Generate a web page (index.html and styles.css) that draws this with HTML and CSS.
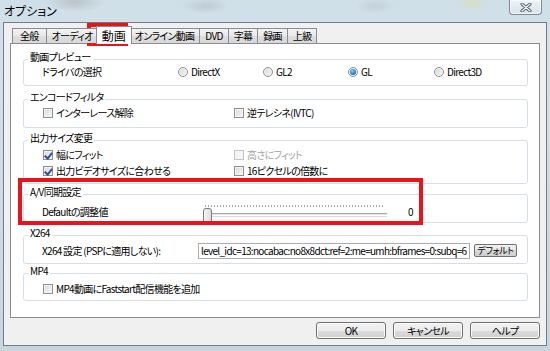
FILE: index.html
```html
<!DOCTYPE html>
<html lang="ja">
  <head>
    <meta charset="UTF-8" />
    <title>オプション</title>
    <link rel="stylesheet" href="styles.css">
  </head>
  <body>
    <div class="window">
      <div class="titlebar">
        <span class="title">オプション</span>
        <button class="close" aria-label="閉じる">
          <svg width="12" height="9" viewBox="0 0 12 9">
            <path d="M2 1 L10 8 M10 1 L2 8" stroke="#44505c" stroke-width="3" stroke-linecap="round" />
            <path d="M2 1 L10 8 M10 1 L2 8" stroke="#ffffff" stroke-width="1.2" stroke-linecap="round" />
          </svg>
        </button>
      </div>

      <div class="client">
        <div class="tabs">
          <span class="tab">全般</span>
          <span class="tab">オーディオ</span>
          <span class="tab active">動画</span>
          <span class="tab">オンライン動画</span>
          <span class="tab">DVD</span>
          <span class="tab">字幕</span>
          <span class="tab">録画</span>
          <span class="tab">上級</span>
        </div>

        <div class="panel">
          <div class="group g-preview">
            <span class="legend">動画プレビュー</span>
            <div class="row drivers">
              <span>ドライバの選択</span>
              <span class="opt"><i class="radio"></i>DirectX</span>
              <span class="opt"><i class="radio"></i>GL2</span>
              <span class="opt"><i class="radio on"></i>GL</span>
              <span class="opt"><i class="radio"></i>Direct3D</span>
            </div>
          </div>

          <div class="group g-filter">
            <span class="legend">エンコードフィルタ</span>
            <div class="row cols">
              <span class="opt"><i class="check"></i>インターレース解除</span>
              <span class="opt"><i class="check"></i>逆テレシネ(IVTC)</span>
            </div>
          </div>

          <div class="group g-size">
            <span class="legend">出力サイズ変更</span>
            <div class="row cols">
              <span class="opt"><i class="check on"></i>幅にフィット</span>
              <span class="opt off"><i class="check"></i>高さにフィット</span>
            </div>
            <div class="row cols">
              <span class="opt"><i class="check on"></i>出力ビデオサイズに合わせる</span>
              <span class="opt"><i class="check"></i>16ピクセルの倍数に</span>
            </div>
          </div>

          <div class="group g-sync">
            <span class="legend">A/V同期設定</span>
            <div class="row sync">
              <span class="sync-label">Defaultの調整値</span>
              <div class="slider">
                <div class="ticks"></div>
                <div class="track"></div>
                <div class="thumb"></div>
              </div>
              <span class="value">0</span>
            </div>
          </div>

          <div class="group g-x264">
            <span class="legend">X264</span>
            <div class="row x264">
              <span class="x264-label">X264 設定 (PSPに適用しない):</span>
              <input class="field" type="text" readonly value="level_idc=13:nocabac:no8x8dct:ref=2:me=umh:bframes=0:subq=6:trellis=1">
              <button class="mini">デフォルト</button>
            </div>
          </div>

          <div class="group g-mp4">
            <span class="legend">MP4</span>
            <div class="row">
              <span class="opt"><i class="check"></i>MP4動画にFaststart配信機能を追加</span>
            </div>
          </div>
        </div>

        <div class="actions">
          <button class="btn">OK</button>
          <button class="btn">キャンセル</button>
          <button class="btn">ヘルプ</button>
        </div>
      </div>

      <div class="mark mark-tab"></div>
      <div class="mark mark-sync"></div>
    </div>
  </body>
</html>
```

FILE: styles.css
```css
body {
  margin: 0;
  width: 550px;
  height: 351px;
  overflow: hidden;
  font-family: "Noto Sans CJK JP", sans-serif;
  font-size: 10px;
  line-height: 12px;
  letter-spacing: -0.7px;
  font-feature-settings: "palt";
  color: #000;
}

button,
input {
  font: inherit;
  color: inherit;
  letter-spacing: inherit;
}

.window {
  position: relative;
  width: 550px;
  height: 351px;
  background:
    radial-gradient(ellipse 30px 10px at 75px 2px, #b9c3c9, transparent),
    radial-gradient(ellipse 24px 8px at 205px 6px, #bccbd4, transparent),
    radial-gradient(ellipse 20px 8px at 375px 6px, #c4d2da, transparent),
    radial-gradient(ellipse 16px 8px at 472px 3px, #d9dfc0, transparent),
    linear-gradient(#cfdfe8, #d4e1e8 40px, #c9d5dc);
}

/* title bar */
.titlebar {
  height: 22px;
  display: flex;
  justify-content: space-between;
  align-items: flex-start;
}

.title {
  padding: 3px 0 0 4px;
  font-size: 12px;
  line-height: 15px;
  letter-spacing: 0;
}

.close {
  width: 33px;
  height: 15px;
  margin-right: 8px;
  padding: 0;
  border: 1px solid #7c8b98;
  border-top: none;
  border-radius: 0 0 4px 4px;
  background: linear-gradient(#eef3f6, #d9e3ea);
  box-shadow: inset 0 0 0 1px rgba(255, 255, 255, 0.6);
  display: flex;
  align-items: center;
  justify-content: center;
}

/* client area */
.client {
  margin: 0 3px;
  height: 324px;
  box-sizing: border-box;
  border: 1px solid #6f7e8b;
  background: #f0f0f0;
  padding: 3px 6px 0 6px;
}

.tabs {
  display: flex;
  align-items: flex-end;
  height: 17px;
  margin-left: 2px;
  position: relative;
  z-index: 1;
}

.tab {
  height: 15px;
  box-sizing: border-box;
  padding: 0 5px;
  margin-left: -1px;
  border: 1px solid #898c95;
  border-bottom: none;
  background: linear-gradient(#f3f3f3, #e8e8e8 50%, #dedede 50%, #d8d8d8);
  line-height: 14px;
  white-space: nowrap;
}

.tab:first-child {
  margin-left: 0;
  padding: 0 7px;
}

.tab.active {
  height: 18px;
  margin: 0 -2px -1px -3px;
  padding: 0 5px;
  background: #fff;
  font-size: 12px;
  line-height: 17px;
  letter-spacing: 0;
  position: relative;
}

.panel {
  height: 275px;
  box-sizing: border-box;
  border: 1px solid #898c95;
  background: #fff;
  padding: 0 11px 0 12px;
  overflow: hidden;
}

/* group boxes */
.group {
  position: relative;
  box-sizing: border-box;
  border: 1px solid #d5dfe5;
  border-radius: 3px;
  padding-left: 18px;
}

.legend {
  position: absolute;
  top: -9px;
  left: 4px;
  padding: 0 2px;
  background: #fff;
  line-height: 12px;
}

.g-preview { margin-top: 15px; height: 27px; padding-top: 4px; }
.g-filter  { margin-top: 13px; height: 29px; padding-top: 5px; }
.g-size    { margin-top: 12px; height: 44px; padding-top: 6px; }
.g-sync    { margin-top: 10px; height: 29px; padding-top: 9px; }
.g-x264    { margin-top: 12px; height: 29px; padding-top: 6px; }
.g-mp4     { margin-top: 9px;  height: 28px; padding-top: 7px; }

.row {
  display: flex;
  align-items: center;
  height: 16px;
  white-space: nowrap;
}

.drivers {
  display: grid;
  grid-template-columns: 136px 85px 85px 86px auto;
  align-items: center;
}

.cols {
  display: grid;
  grid-template-columns: 191px auto;
  align-items: center;
}

.opt {
  display: flex;
  align-items: center;
}

.opt.off {
  color: #a3a3a3;
}

/* checkbox and radio */
.check,
.radio {
  position: relative;
  width: 10px;
  height: 10px;
  box-sizing: border-box;
  border: 1px solid #8e8f8f;
  background: linear-gradient(135deg, #d8d8d8, #f7f7f7);
  box-shadow: inset 0 0 0 1px #f4f4f4;
  margin: 0 3px 0 1px;
  flex: none;
}

.off .check {
  border-color: #c4c4c4;
  background: #f4f4f4;
}

.check.on::after {
  content: "";
  position: absolute;
  left: 2px;
  top: 0;
  width: 3px;
  height: 6px;
  border: solid #2a4f9c;
  border-width: 0 2px 2px 0;
  transform: rotate(40deg);
}

.radio {
  border-radius: 50%;
  margin: 0 3px 0 0;
}

.radio.on::after {
  content: "";
  position: absolute;
  left: 1px;
  top: 1px;
  width: 6px;
  height: 6px;
  border-radius: 50%;
  background: radial-gradient(circle at 40% 35%, #7fd0ff, #1a6cc0 70%, #0d3f7a);
}

/* slider */
.sync-label {
  width: 158px;
}

.slider {
  position: relative;
  width: 190px;
  height: 16px;
}

.ticks {
  position: absolute;
  left: 5px;
  top: 1px;
  width: 180px;
  height: 2px;
  background: repeating-linear-gradient(to right, #a8a8a8 0 1px, transparent 1px 3px);
}

.track {
  position: absolute;
  left: 3px;
  top: 9px;
  width: 184px;
  height: 3px;
  box-sizing: border-box;
  border-top: 1px solid #a6a6a6;
  border-bottom: 1px solid #ffffff;
  background: #e5e5e5;
  box-shadow: 0 1px 0 #dcdcdc;
}

.thumb {
  position: absolute;
  left: 3px;
  top: 4px;
  width: 9px;
  height: 15px;
  box-sizing: border-box;
  border: 1px solid #7b7b7b;
  border-radius: 3px 3px 2px 2px;
  background: linear-gradient(to right, #f6f6f6, #dcdcdc);
}

.value {
  margin-left: 18px;
}

/* x264 */
.x264 {
  height: 17px;
}

.x264-label {
  width: 156px;
}

.field {
  width: 272px;
  height: 16px;
  box-sizing: border-box;
  margin: 0;
  border: 1px solid #abadb3;
  padding: 0 2px;
  line-height: 14px;
  background: #fff;
  outline: none;
}

.mini {
  width: 43px;
  height: 13px;
  margin-left: 4px;
  padding: 0;
  border: 1px solid #707070;
  border-radius: 2px;
  background: linear-gradient(#f2f2f2, #e4e4e4 50%, #d8d8d8 50%, #cfcfcf);
  font-size: 9px;
  letter-spacing: -0.4px;
  line-height: 11px;
  white-space: nowrap;
}

/* bottom buttons */
.actions {
  display: flex;
  justify-content: flex-end;
  gap: 7px;
  margin-top: 4px;
}

.btn {
  width: 70px;
  height: 17px;
  padding: 0;
  border: 1px solid #707070;
  border-radius: 3px;
  background: linear-gradient(#f2f2f2, #ebebeb 50%, #dddddd 50%, #cfcfcf);
  box-shadow: inset 0 0 0 1px #fbfbfb;
  line-height: 14px;
}

/* red highlight marks */
.mark {
  position: absolute;
  box-sizing: border-box;
  border: 4px solid #e8141c;
}

.mark-tab {
  left: 87px;
  top: 23px;
  width: 41px;
  height: 23px;
}

.mark-sync {
  left: 18px;
  top: 178px;
  width: 405px;
  height: 47px;
}
```
